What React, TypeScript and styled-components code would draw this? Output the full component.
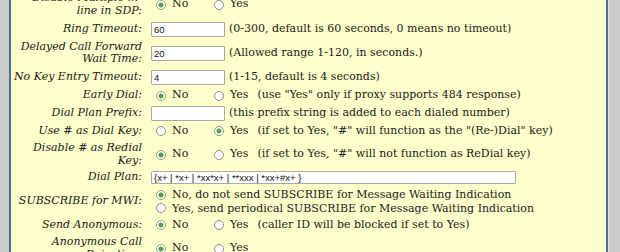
import styled, { createGlobalStyle } from "styled-components";

const GlobalStyle = createGlobalStyle`
  html, body {
    margin: 0;
    padding: 0;
    background: #cccccc;
    overflow: hidden;
  }
`;

const Page = styled.div`
  width: 620px;
  height: 252px;
  overflow: hidden;
  background: #cccccc;
  padding-left: 9px;
  box-sizing: border-box;
`;

const Panel = styled.div`
  width: 595px;
  margin-top: -8px;
  background: #ffffcc;
  border-left: 2px solid #4d6e96;
  border-right: 2px solid #4d6e96;
  box-shadow: 1px 0 0 #e4e4e4;
  padding-bottom: 40px;
  font-family: "DejaVu Serif", serif;
  font-size: 11px;
  line-height: 12.8px;
  color: #1a1a1a;
`;

const Form = styled.div`
  display: grid;
  grid-template-columns: 131px 1fr;
  column-gap: 9px;
  row-gap: 4px;
  align-items: center;
`;

const Label = styled.div`
  text-align: right;
  font-style: italic;
`;

const Value = styled.div`
  display: flex;
  align-items: center;
  white-space: nowrap;
`;

const Stack = styled.div`
  display: flex;
  flex-direction: column;
  line-height: 13.3px;
  white-space: nowrap;
`;

const TextBox = styled.input<{ $wide?: boolean }>`
  box-sizing: border-box;
  width: ${(p) => (p.$wide ? "365px" : "74px")};
  height: ${(p) => (p.$wide ? "13px" : "15px")};
  margin: 0 4px 0 0;
  padding: 0 2px;
  border: 1px solid #a9a9a9;
  border-radius: 1px;
  background: #fff;
  font-family: "Liberation Sans", Arial, sans-serif;
  font-size: 9.5px;
  color: #111;
  outline: none;
`;

const Option = styled.label<{ $w?: number }>`
  display: inline-flex;
  align-items: center;
  gap: 6px;
  padding-left: 5px;
  width: ${(p) => (p.$w ? `${p.$w}px` : "auto")};
  box-sizing: border-box;
`;

const Radio = styled.input.attrs({ type: "radio", readOnly: true })`
  appearance: none;
  margin: 0;
  width: 10px;
  height: 10px;
  border: 1px solid #8f8f8f;
  border-radius: 50%;
  background: #fff;
  flex: none;
  &:checked {
    border-color: #8aa57e;
    background: radial-gradient(circle, #5f9d4e 0 2.2px, #fff 2.9px);
  }
`;

const Note = styled.span`
  margin-left: 9px;
`;

type YesNoProps = { on: "No" | "Yes"; note?: string };

const YesNo = ({ on, note }: YesNoProps) => (
  <Value>
    <Option $w={58}>
      <Radio checked={on === "No"} />
      No
    </Option>
    <Option>
      <Radio checked={on === "Yes"} />
      Yes
    </Option>
    {note && <Note>{note}</Note>}
  </Value>
);

const Field = ({ val, note, wide }: { val: string; note?: string; wide?: boolean }) => (
  <Value>
    <TextBox value={val} readOnly $wide={wide} />
    {note}
  </Value>
);

export default function App() {
  return (
    <Page>
      <GlobalStyle />
      <Panel>
        <Form>
          <Label>
            Disable Multiple m-
            <br />
            line in SDP:
          </Label>
          <YesNo on="No" />

          <Label>Ring Timeout:</Label>
          <Field val="60" note="(0-300, default is 60 seconds, 0 means no timeout)" />

          <Label>Delayed Call Forward Wait Time:</Label>
          <Field val="20" note="(Allowed range 1-120, in seconds.)" />

          <Label>No Key Entry Timeout:</Label>
          <Field val="4" note="(1-15, default is 4 seconds)" />

          <Label>Early Dial:</Label>
          <YesNo on="No" note={'(use "Yes" only if proxy supports 484 response)'} />

          <Label>Dial Plan Prefix:</Label>
          <Field val="" note="(this prefix string is added to each dialed number)" />

          <Label>Use # as Dial Key:</Label>
          <YesNo on="Yes" note={'(if set to Yes, "#" will function as the "(Re-)Dial" key)'} />

          <Label>Disable # as Redial Key:</Label>
          <YesNo on="No" note={'(if set to Yes, "#" will not function as ReDial key)'} />

          <Label>Dial Plan:</Label>
          <Field val="{x+ | *x+ | *xx*x+ | **xxx | *xx+#x+ }" wide />

          <Label>SUBSCRIBE for MWI:</Label>
          <Stack>
            <Option>
              <Radio checked />
              No, do not send SUBSCRIBE for Message Waiting Indication
            </Option>
            <Option>
              <Radio checked={false} />
              Yes, send periodical SUBSCRIBE for Message Waiting Indication
            </Option>
          </Stack>

          <Label>Send Anonymous:</Label>
          <YesNo on="No" note="(caller ID will be blocked if set to Yes)" />

          <Label>Anonymous Call Rejection:</Label>
          <YesNo on="No" />
        </Form>
      </Panel>
    </Page>
  );
}
